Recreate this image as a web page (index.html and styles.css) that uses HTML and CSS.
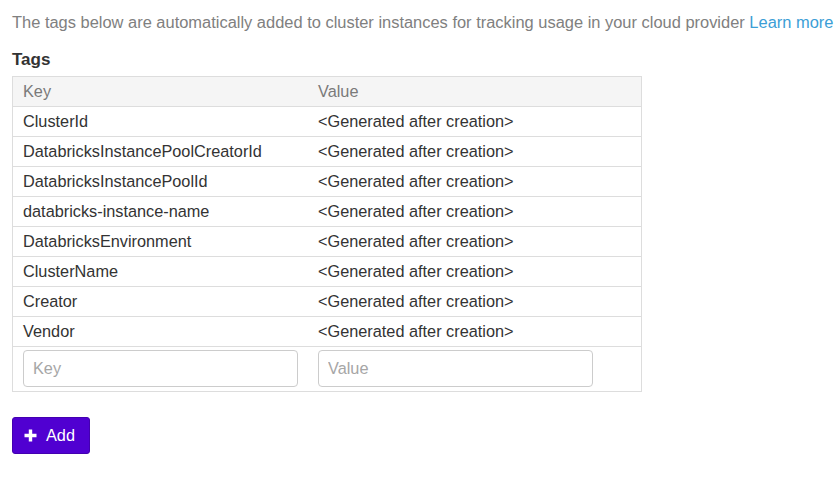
FILE: index.html
```html
<!DOCTYPE html>
<html>
<head>
<meta charset="utf-8">
<link rel="stylesheet" href="styles.css">
</head>
<body>
<div class="page">
  <p class="intro">The tags below are automatically added to cluster instances for tracking usage in your cloud provider <a class="link" href="#">Learn more</a></p>
  <h3 class="title">Tags</h3>
  <table class="tags">
    <thead>
      <tr><th class="col-key">Key</th><th class="col-val">Value</th></tr>
    </thead>
    <tbody>
      <tr><td>ClusterId</td><td>&lt;Generated after creation&gt;</td></tr>
      <tr><td>DatabricksInstancePoolCreatorId</td><td>&lt;Generated after creation&gt;</td></tr>
      <tr><td>DatabricksInstancePoolId</td><td>&lt;Generated after creation&gt;</td></tr>
      <tr><td>databricks-instance-name</td><td>&lt;Generated after creation&gt;</td></tr>
      <tr><td>DatabricksEnvironment</td><td>&lt;Generated after creation&gt;</td></tr>
      <tr><td>ClusterName</td><td>&lt;Generated after creation&gt;</td></tr>
      <tr><td>Creator</td><td>&lt;Generated after creation&gt;</td></tr>
      <tr><td>Vendor</td><td>&lt;Generated after creation&gt;</td></tr>
      <tr class="input-row">
        <td><input class="field" type="text" placeholder="Key"></td>
        <td><input class="field" type="text" placeholder="Value"></td>
      </tr>
    </tbody>
  </table>
  <button class="add-btn" type="button">
    <svg class="plus" width="13" height="13" viewBox="0 0 13 13"><path d="M6.5 0.5v12M0.5 6.5h12" stroke="#fff" stroke-width="3.4" fill="none"/></svg>
    <span>Add</span>
  </button>
</div>
</body>
</html>
```
FILE: styles.css
```css
* { box-sizing: border-box; }
html, body { margin: 0; padding: 0; background: #fff; }
body {
  font-family: "Liberation Sans", Arial, Helvetica, sans-serif;
  color: #333;
}
.page { padding: 12px 12px 0 12px; }
.intro {
  margin: 0;
  font-size: 16.45px;
  line-height: 20px;
  color: #808080;
  white-space: nowrap;
}
.link { text-decoration: none; color: #3b9ed6; }
.title {
  margin: 18px 0 0 0;
  font-size: 17px;
  line-height: 20px;
  font-weight: bold;
  color: #333;
}
.tags {
  margin-top: 6px;
  width: 630px;
  border-collapse: collapse;
  border: 1px solid #ddd;
  font-size: 16.3px;
}
.tags th, .tags td {
  height: 30px;
  padding: 0 10px 1px 10px;
  text-align: left;
  vertical-align: middle;
  border-top: 1px solid #ddd;
  line-height: 18px;
}
.tags th {
  background: #f5f5f5;
  color: #7a7a7a;
  font-weight: normal;
}
.col-key { width: 295px; }
.tags td { color: #333; }
.input-row td { height: 44px; padding-top: 3px; padding-bottom: 4px; }
.field {
  width: 275px;
  height: 37px;
  border: 1px solid #ccc;
  border-radius: 4px;
  padding: 0 9px;
  font-family: inherit;
  font-size: 16.3px;
  color: #333;
  display: block;
  outline: none;
}
.field::placeholder { color: #a6a6a6; }
.add-btn {
  margin-top: 25px;
  display: flex;
  align-items: center;
  gap: 9px;
  width: 78px;
  height: 37px;
  padding: 0 0 0 11px;
  background: #5000d1;
  border: 1px solid #4300b0;
  border-radius: 3px;
  color: #fff;
  font-family: inherit;
  font-size: 16.3px;
  font-weight: normal;
}
.plus { display: block; }
```
